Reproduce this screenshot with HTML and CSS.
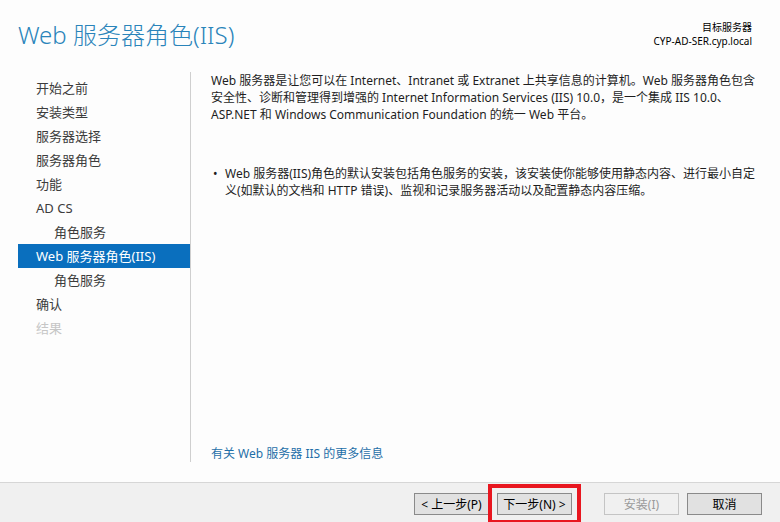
FILE: index.html
```html
<!DOCTYPE html>
<html lang="zh-CN">
<head>
<meta charset="utf-8">
<title>Web 服务器角色(IIS)</title>
<link rel="stylesheet" href="styles.css">
</head>
<body>
<div class="window">
  <header class="header">
    <h1 class="title">Web 服务器角色(IIS)</h1>
    <div class="target">
      <div>目标服务器</div>
      <div>CYP-AD-SER.cyp.local</div>
    </div>
  </header>
  <main class="body">
    <nav class="nav">
      <div class="nav-item">开始之前</div>
      <div class="nav-item">安装类型</div>
      <div class="nav-item">服务器选择</div>
      <div class="nav-item">服务器角色</div>
      <div class="nav-item">功能</div>
      <div class="nav-item">AD CS</div>
      <div class="nav-item sub">角色服务</div>
      <div class="nav-item active">Web 服务器角色(IIS)</div>
      <div class="nav-item sub">角色服务</div>
      <div class="nav-item">确认</div>
      <div class="nav-item disabled">结果</div>
    </nav>
    <section class="content">
      <p class="intro">Web 服务器是让您可以在 Internet、Intranet 或 Extranet 上共享信息的计算机。Web 服务器角色包含<br>安全性、诊断和管理得到增强的 Internet Information Services (IIS) 10.0，是一个集成 IIS 10.0、<br>ASP.NET 和 Windows Communication Foundation 的统一 Web 平台。</p>
      <ul class="bullets">
        <li>Web 服务器(IIS)角色的默认安装包括角色服务的安装，该安装使你能够使用静态内容、进行最小自定<br>义(如默认的文档和 HTTP 错误)、监视和记录服务器活动以及配置静态内容压缩。</li>
      </ul>
      <a class="more" href="#">有关 Web 服务器 IIS 的更多信息</a>
    </section>
  </main>
  <footer class="footer">
    <button class="btn">&lt; 上一步(P)</button>
    <button class="btn">下一步(N) &gt;</button>
    <button class="btn gap-left" disabled>安装(I)</button>
    <button class="btn">取消</button>
    <div class="highlight"></div>
  </footer>
</div>
</body>
</html>
```
FILE: styles.css
```css
* { box-sizing: border-box; }
html, body { margin: 0; padding: 0; }
body {
  width: 780px;
  height: 522px;
  overflow: hidden;
  background: #fdfdfd;
  font-family: "Noto Sans", "Noto Sans CJK SC", sans-serif;
  color: #1e1e1e;
}
.window {
  width: 780px;
  height: 522px;
  display: flex;
  flex-direction: column;
}
.header {
  height: 72px;
  display: flex;
  justify-content: space-between;
  align-items: flex-start;
  padding: 0 28px 0 18px;
}
.title {
  margin: 18px 0 0 0;
  font-size: 24px;
  font-weight: 300;
  line-height: 34px;
  color: #2a84ba;
}
.target {
  margin-top: 20px;
  text-align: right;
  font-size: 10px;
  line-height: 14px;
  color: #000;
}
.body {
  height: 410px;
  display: flex;
  padding-bottom: 20px;
}
.nav {
  width: 191px;
  padding: 4px 0 0 18px;
  border-right: 1px solid #cfcfcf;
}
.nav-item {
  width: 172px;
  height: 24px;
  line-height: 24px;
  padding-left: 18px;
  font-size: 13px;
  color: #3c3c3c;
  white-space: nowrap;
}
.nav-item.sub { padding-left: 36px; }
.nav-item.active { background: #0a6fbe; color: #fff; }
.nav-item.disabled { color: #c6c6c6; }
.content {
  flex: 1;
  display: flex;
  flex-direction: column;
  padding: 0 10px 0 20px;
  font-size: 12px;
  line-height: 17px;
  white-space: nowrap;
}
.intro { margin: 0; }
.bullets {
  margin: 42px 0 0 0;
  padding: 0 0 0 14px;
}
.bullets li { list-style: none; position: relative; }
.bullets li::before {
  content: "•";
  position: absolute;
  left: -12px;
  top: 0;
}
.more {
  margin-top: auto;
  color: #1f6fa8;
  text-decoration: none;
}
.footer {
  position: relative;
  flex: 1;
  background: #f0f0f0;
  border-top: 1px solid #d6d6d6;
  display: flex;
  justify-content: flex-end;
  align-items: flex-start;
  padding: 10px 18px 0 0;
  gap: 8px;
}
.btn {
  width: 75px;
  height: 22px;
  padding: 0;
  background: #e1e1e1;
  border: 1px solid #8a8a8a;
  font-family: "Noto Sans", "Noto Sans CJK SC", sans-serif;
  font-size: 12px;
  color: #000;
  border-radius: 0;
}
.btn:disabled {
  background: #f0f0f0;
  border-color: #c4c4c4;
  color: #9a9a9a;
}
.gap-left { margin-left: 24px; }
.highlight {
  position: absolute;
  left: 488px;
  top: 1px;
  width: 93px;
  height: 40px;
  border: 4px solid #e8161f;
}
```
